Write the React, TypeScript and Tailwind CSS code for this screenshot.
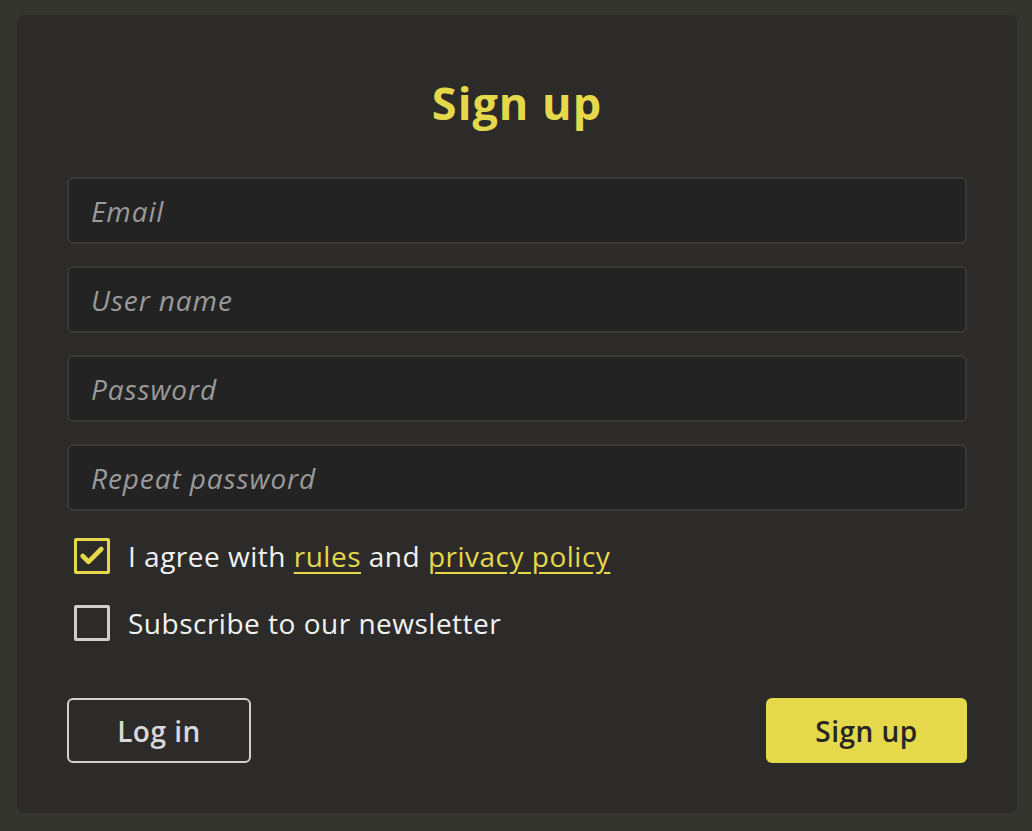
import { Check } from 'lucide-react';

const fields = ['Email', 'User name', 'Password', 'Repeat password'];

export default function App() {
  return (
    <div
      className="min-h-[831px] bg-[#353530] pl-[17px] pr-[15px] pt-[15px] pb-[18px]"
      style={{ fontFamily: '"Open Sans", "Noto Sans", sans-serif' }}
    >
      <div className="h-[798px] rounded-[6px] bg-[#2c2b29] px-[50px] pt-[62px]">
        <h1 className="text-center text-[45px] font-bold leading-[52px] text-[#e5d84a] tracking-[1px]">Sign up</h1>

        <div className="mt-[48px] flex flex-col gap-[22px]">
          {fields.map((f) => (
            <input
              key={f}
              placeholder={f}
              className="h-[67px] w-full rounded-[6px] border-2 border-[#393938] bg-[#232323] px-[22px] text-[28px] italic tracking-[0.9px] text-white placeholder:text-[#9a9a9a] outline-none"
            />
          ))}
        </div>

        {/* Checkboxes */}
        <div className="mt-[27px] flex flex-col gap-[31px] pl-[7px]">
          <label className="flex items-center gap-[18px] text-[28px] leading-[36px] tracking-[0.5px] text-[#f2f2f2]">
            <span className="flex h-[36px] w-[36px] items-center justify-center rounded-[2px] border-[3px] border-[#e5d84a]">
              <Check size={28} strokeWidth={4} className="text-[#e5d84a]" />
            </span>
            <span>
              I agree with <a className="text-[#e5d84a] underline underline-offset-[5px]">rules</a> and{' '}
              <a className="text-[#e5d84a] underline underline-offset-[5px]">privacy policy</a>
            </span>
          </label>
          <label className="flex items-center gap-[18px] text-[28px] leading-[36px] tracking-[0.5px] text-[#f2f2f2]">
            <span className="h-[36px] w-[36px] rounded-[2px] border-[3px] border-[#cfcfcf]" />
            <span>Subscribe to our newsletter</span>
          </label>
        </div>

        {/* Buttons */}
        <div className="mt-[57px] flex items-center justify-between">
          <button className="h-[65px] w-[184px] rounded-[6px] border-2 border-[#d0d0d0] text-[28px] font-semibold tracking-[0.5px] text-[#d8d8d8]">
            Log in
          </button>
          <button className="h-[65px] w-[201px] rounded-[6px] bg-[#e5d84a] text-[28px] font-semibold tracking-[0.5px] text-[#262626]">
            Sign up
          </button>
        </div>
      </div>
    </div>
  );
}
